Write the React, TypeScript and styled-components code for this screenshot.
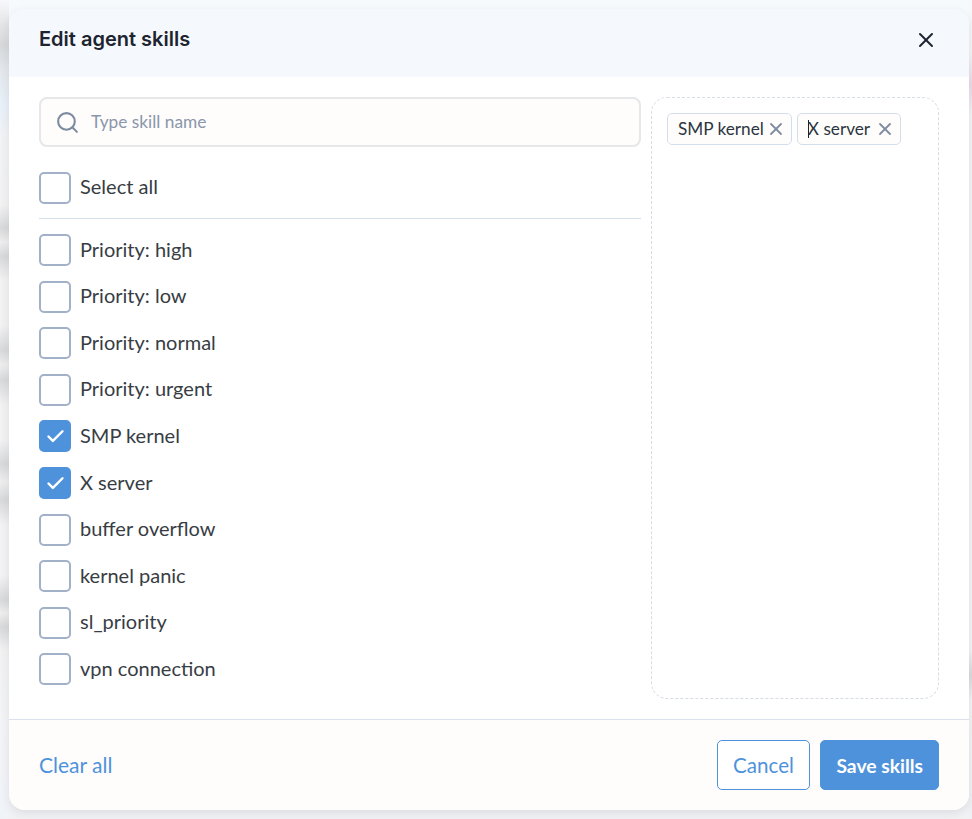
import { createGlobalStyle, styled } from "styled-components";
import { Search, X, Check } from "lucide-react";

const GlobalStyle = createGlobalStyle`
    html, body {
        margin: 0;
        padding: 0;
        height: 100%;
    }
    body {
        width: 972px;
        height: 819px;
        overflow: hidden;
        font-family: "Lato", "Liberation Sans", sans-serif;
        background: #f2f3f5;
    }
`

// the page behind the dialog is blurred, only its edges show
const Backdrop = styled.div`
    width: 972px;
    height: 819px;
    box-sizing: border-box;
    padding: 9px 3px 9px 9px;
    background:
        linear-gradient(180deg,
            #f6f8fb 0, #e6e7e9 22px, #d6d8da 45px, #e4e8ec 70px, #e8f0f8 105px, #f2f3f5 140px,
            #f2f2f3 205px, #d8d9da 228px, #eeeeef 242px, #d8d9da 256px, #f2f2f3 280px,
            #f2f2f3 325px, #d8d9da 350px, #eeeeef 365px, #d8d9da 380px, #f2f2f3 405px,
            #f2f2f3 440px, #d8d9da 464px, #eeeeef 482px, #d8d9da 500px, #f3f2f4 525px,
            #f3f2f4 575px, #d8d9da 600px, #eeeeef 613px, #d8d9da 627px, #f2f2f3 650px,
            #f3f4f6 720px, #f0f3f8 819px) left top / 9px 100% no-repeat,
        linear-gradient(180deg,
            #f6f8fb 0, #f3f3f4 55px, #ecd9e8 85px, #f3f3f4 115px,
            #f3f3f4 650px, #d9d9da 675px, #f3f3f4 700px, #eef0f3 819px) right top / 3px 100% no-repeat,
        linear-gradient(180deg, #f7fafd 0, #f7fafd 20px, #f1f2f4 100%);
`

const Modal = styled.div`
    width: 960px;
    height: 801px;
    display: flex;
    flex-direction: column;
    background: #ffffff;
    border-radius: 16px;
    overflow: hidden;
    box-shadow: 0 3px 10px rgba(30, 40, 60, 0.1);
`

const Header = styled.header`
    height: 68px;
    flex: none;
    box-sizing: border-box;
    padding: 0 29px 6px 30px;
    display: flex;
    align-items: center;
    justify-content: space-between;
    background: #f5f9fd;
`

const Title = styled.h2`
    margin: 0 0 3px;
    font-family: "Inter", sans-serif;
    font-size: 20px;
    font-weight: 600;
    color: #1d2430;
`

const CloseButton = styled.button`
    width: 28px;
    height: 28px;
    padding: 0;
    border: 0;
    background: none;
    color: #1d2430;
    display: flex;
    align-items: center;
    justify-content: center;
`

const Body = styled.div`
    flex: 1;
    display: flex;
    gap: 10px;
    padding: 20px 30px 20px 30px;
    box-sizing: border-box;
`

const LeftColumn = styled.div`
    width: 602px;
    flex: none;
    display: flex;
    flex-direction: column;
`

const SearchBox = styled.div`
    height: 50px;
    box-sizing: border-box;
    display: flex;
    align-items: center;
    gap: 11px;
    padding: 0 14px;
    background: #fefdfb;
    border: 2px solid #e6e7e9;
    border-radius: 8px;
    color: #7d8ba0;
`

const SearchText = styled.span`
    margin-bottom: 2px;
    font-size: 17.3px;
    color: #8a96ab;
`

const Row = styled.label`
    height: 46.55px;
    display: flex;
    align-items: center;
    gap: 9px;
    font-size: 20px;
    color: #383d44;
`

const RowLabel = styled.span`
    margin-bottom: 3px;
`

const SelectAll = styled(Row)`
    margin-top: 25px;
    height: 31px;
    padding-bottom: 15px;
    border-bottom: 1px solid #d6e0ea;
`

const Box = styled.span<{ $checked?: boolean }>`
    width: 32px;
    height: 32px;
    box-sizing: border-box;
    flex: none;
    border-radius: 5px;
    border: 2px solid ${props => (props.$checked ? "#4f92dc" : "#a3b1c8")};
    background: ${props => (props.$checked ? "#4f92dc" : "#ffffff")};
    color: #ffffff;
    display: flex;
    align-items: center;
    justify-content: center;
`

const List = styled.div`
    display: flex;
    flex-direction: column;
    padding-top: 8px;
`

const Selected = styled.div`
    width: 288px;
    height: 602px;
    flex: none;
    box-sizing: border-box;
    border: 1px dashed #d6dde6;
    border-radius: 16px;
    padding: 15px;
    display: flex;
    align-items: flex-start;
    gap: 5px;
`

const Tag = styled.span`
    position: relative;
    height: 32px;
    min-width: 104px;
    box-sizing: border-box;
    display: flex;
    align-items: center;
    justify-content: space-between;
    padding: 0 5px 0 10px;
    font-size: 17.2px;
    color: #2b3542;
    background: #fefdfb;
    border: 1px solid #d3deec;
    border-radius: 5px;
`

const TagName = styled.span`
    margin-bottom: 2px;
`

const TagRemove = styled.span`
    display: flex;
    margin-left: 2px;
    color: #7f8ca1;
`

// mouse text cursor caught in the screenshot
const TextCursor = styled.span`
    position: absolute;
    left: 10px;
    top: 6px;
    width: 1px;
    height: 18px;
    background: #1d2430;
`

const Footer = styled.footer`
    height: 91px;
    flex: none;
    box-sizing: border-box;
    padding: 0 30px;
    display: flex;
    align-items: center;
    justify-content: space-between;
    background: #fefdfb;
    border-top: 1px solid #dbe1ea;
`

const ClearAll = styled.a`
    margin-bottom: 2px;
    font-size: 21px;
    color: #4f92dc;
`

const Actions = styled.div`
    display: flex;
    gap: 10px;
`

const Button = styled.button<{ $primary?: boolean }>`
    height: 50px;
    box-sizing: border-box;
    padding: 0 ${props => (props.$primary ? "15px" : "15.5px")};
    font-family: inherit;
    font-size: ${props => (props.$primary ? "19.3px" : "20.6px")};
    font-weight: ${props => (props.$primary ? 700 : 400)};
    border-radius: 5px;
    border: 1px solid #4f92dc;
    color: ${props => (props.$primary ? "#ffffff" : "#4f92dc")};
    background: ${props => (props.$primary ? "#4f92dc" : "#ffffff")};
`

const skills = [
    { name: "Priority: high" },
    { name: "Priority: low" },
    { name: "Priority: normal" },
    { name: "Priority: urgent" },
    { name: "SMP kernel", checked: true },
    { name: "X server", checked: true },
    { name: "buffer overflow" },
    { name: "kernel panic" },
    { name: "sl_priority" },
    { name: "vpn connection" },
]

export default function App() {
    return (
        <>
            <GlobalStyle />
            <Backdrop>
                <Modal>
                    <Header>
                        <Title>Edit agent skills</Title>
                        <CloseButton aria-label="close"><X size={24} strokeWidth={2} /></CloseButton>
                    </Header>
                    <Body>
                        <LeftColumn>
                            <SearchBox>
                                <Search size={25} strokeWidth={2} />
                                <SearchText>Type skill name</SearchText>
                            </SearchBox>
                            <SelectAll><Box /><RowLabel>Select all</RowLabel></SelectAll>
                            <List>
                                {skills.map(skill => (
                                    <Row key={skill.name}>
                                        <Box $checked={skill.checked}>
                                            {skill.checked && <Check size={21} strokeWidth={2.8} />}
                                        </Box>
                                        <RowLabel>{skill.name}</RowLabel>
                                    </Row>
                                ))}
                            </List>
                        </LeftColumn>
                        <Selected>
                            {skills.filter(skill => skill.checked).map(skill => (
                                <Tag key={skill.name}>
                                    {skill.name === "X server" && <TextCursor />}
                                    <TagName>{skill.name}</TagName>
                                    <TagRemove><X size={20} strokeWidth={2.2} /></TagRemove>
                                </Tag>
                            ))}
                        </Selected>
                    </Body>
                    <Footer>
                        <ClearAll>Clear all</ClearAll>
                        <Actions>
                            <Button>Cancel</Button>
                            <Button $primary>Save skills</Button>
                        </Actions>
                    </Footer>
                </Modal>
            </Backdrop>
        </>
    )
}
